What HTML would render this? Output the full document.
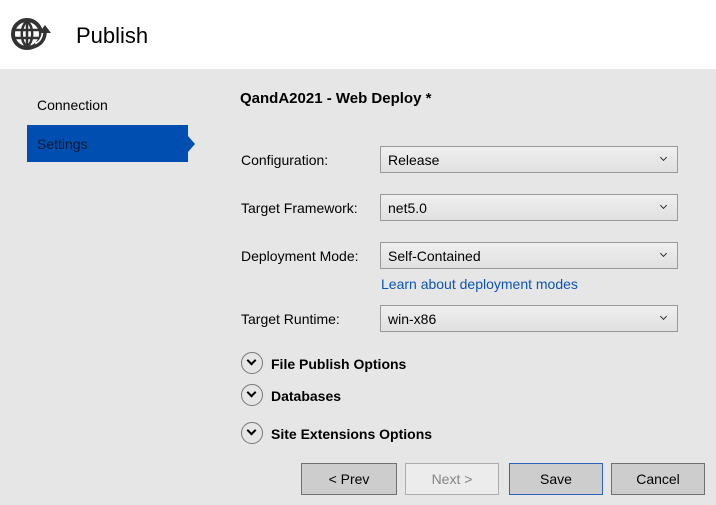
<!DOCTYPE html>
<html><head><style>
*{margin:0;padding:0;box-sizing:border-box}
body{width:716px;height:505px;background:#e6e6e6;font-family:"Segoe UI","Liberation Sans",sans-serif;font-size:14px;color:#000;position:relative;overflow:hidden}
.hdr{position:absolute;left:0;top:0;width:716px;height:69px;background:#fff}
.abs{position:absolute;white-space:nowrap}
.sel{position:absolute;left:380px;width:298px;height:27px;border:1px solid #999;background:linear-gradient(#efefef,#e0e0e0);padding:5px 7px;font-size:14px;line-height:17px}
.sel:after{content:"";position:absolute;right:11px;top:8px;width:4px;height:4px;border-right:1.5px solid #333;border-bottom:1.5px solid #333;transform:rotate(45deg)}
.lbl{position:absolute;left:241px;font-size:14px}
.exp{position:absolute;left:241px;width:22px;height:22px;border:1.5px solid #777;border-radius:50%}
.exp:after{content:"";position:absolute;left:6px;top:4px;width:5px;height:5px;border-right:2px solid #000;border-bottom:2px solid #000;transform:rotate(45deg)}
.exl{position:absolute;left:271px;font-weight:bold;font-size:14px}
.btn{position:absolute;top:463px;height:32px;border:1px solid #707070;background:#cdcdcd;text-align:center;line-height:31px;font-size:14px}
</style></head><body>
<div class="hdr"></div>
<svg class="abs" style="left:0;top:0" width="60" height="60" viewBox="0 0 60 60">
<circle cx="27" cy="34" r="14" fill="none" stroke="#333" stroke-width="4"/>
<path d="M14 30H40M14 38H40M27 21V47M27 21C20 27 20 41 27 47M27 21C34 27 34 41 27 47" fill="none" stroke="#333" stroke-width="2.5"/>
<path d="M36 46C42 44 45 38 45 32" fill="none" stroke="#fff" stroke-width="7"/>
<path d="M33 47C41 45 45 39 45 32" fill="none" stroke="#333" stroke-width="3.5"/>
<path d="M39 33L45 25L51 33Z" fill="#333"/>
</svg>
<div class="abs" style="left:76px;top:23px;font-size:22px">Publish</div>
<div class="abs" style="left:37px;top:97px">Connection</div>
<div class="abs" style="left:27px;top:125px;width:161px;height:37px;background:#004fb0"></div>
<div class="abs" style="left:188px;top:136px;width:0;height:0;border-top:8px solid transparent;border-bottom:8px solid transparent;border-left:7px solid #004fb0"></div>
<div class="abs" style="left:37px;top:136px;color:#0b1a33">Settings</div>
<div class="abs" style="left:240px;top:90px;font-weight:bold;font-size:15px">QandA2021 - Web Deploy *</div>
<div class="lbl" style="top:152px">Configuration:</div>
<div class="sel" style="top:146px">Release</div>
<div class="lbl" style="top:200px">Target Framework:</div>
<div class="sel" style="top:194px">net5.0</div>
<div class="lbl" style="top:248px">Deployment Mode:</div>
<div class="sel" style="top:242px">Self-Contained</div>
<div class="abs" style="left:381px;top:276px;color:#0d55b6">Learn about deployment modes</div>
<div class="lbl" style="top:311px">Target Runtime:</div>
<div class="sel" style="top:305px">win-x86</div>
<div class="exp" style="top:352px"></div><div class="exl" style="top:356px">File Publish Options</div>
<div class="exp" style="top:384px"></div><div class="exl" style="top:388px">Databases</div>
<div class="exp" style="top:422px"></div><div class="exl" style="top:426px">Site Extensions Options</div>
<div class="btn" style="left:301px;width:96px">&lt; Prev</div>
<div class="btn" style="left:405px;width:94px;background:#ececec;border-color:#adadad;color:#858585">Next &gt;</div>
<div class="btn" style="left:509px;width:94px;border-color:#2c62b8">Save</div>
<div class="btn" style="left:611px;width:94px">Cancel</div>
</body></html>
